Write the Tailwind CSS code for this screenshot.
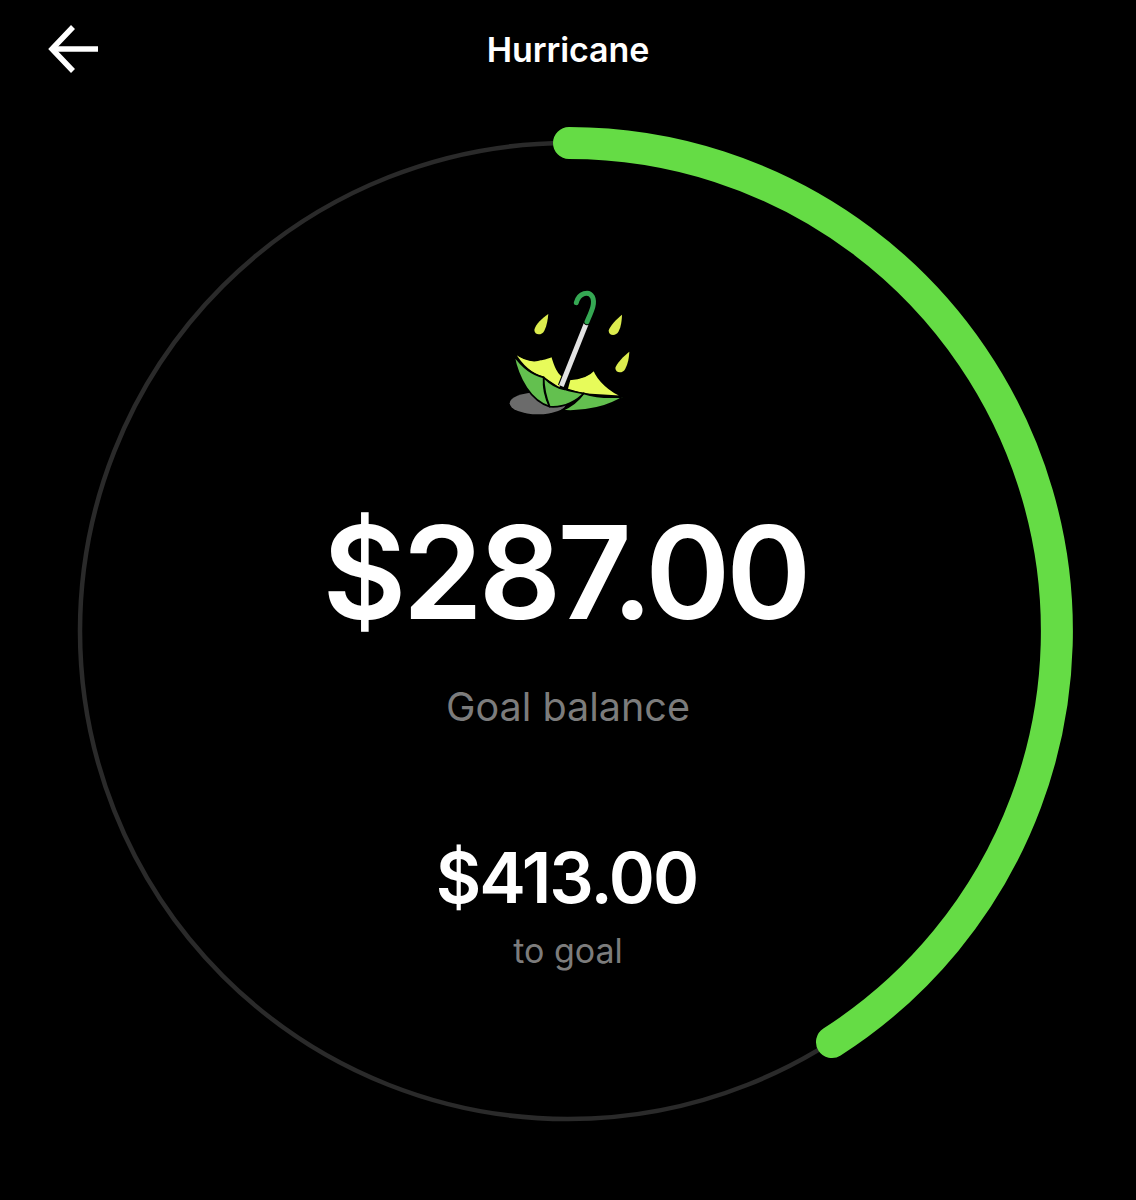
<!DOCTYPE html>
<html lang="en">
<head>
    <meta charset="UTF-8">
    <title>Hurricane</title>
    <script src="https://cdn.jsdelivr.net/npm/@tailwindcss/browser@4"></script>
</head>
<body class="bg-black">
    <div class="relative w-[1136px] h-[1200px] overflow-hidden bg-black text-white font-['Inter',sans-serif]">
        <!-- Progress ring -->
        <svg class="absolute left-0 top-0" width="1136" height="1200" viewBox="0 0 1136 1200" fill="none">
            <circle cx="568" cy="631" r="488" stroke="#2a2a2a" stroke-width="4.5"/>
            <path d="M569 143 A488 488 0 0 1 832 1042" stroke="#65dc45" stroke-width="32" stroke-linecap="round"/>
        </svg>

        <!-- Header -->
        <div class="relative flex items-center justify-center h-[100px]">
            <svg class="absolute left-[47px] top-[24px]" width="54" height="50" viewBox="0 0 54 50" fill="none" stroke="#fff" stroke-width="5.5">
                <path d="M51 25 H5"/>
                <path d="M26 3 L5 25 L26 47" stroke-linejoin="miter"/>
            </svg>
            <h1 class="text-[34px] leading-none font-semibold tracking-[-0.1px]">Hurricane</h1>
        </div>

        <!-- Goal details -->
        <div class="relative flex flex-col items-center">
            <svg class="mt-[180px]" width="150" height="140" viewBox="0 0 450 420" fill="none">
                <ellipse cx="135" cy="370" rx="85" ry="33" fill="#6b6b6b"/>
                <!-- rain drops -->
                <path d="M166 102 C150 112 126 135 124 150 C124 166 146 168 154 152 C162 136 164 120 166 102Z" fill="#dcec4e"/>
                <path d="M387 104 C371 116 349 140 347 152 C347 168 369 170 377 154 C385 138 386 122 387 104Z" fill="#dcec4e"/>
                <path d="M409 215 C393 227 369 252 367 264 C367 280 389 282 397 266 C405 250 408 234 409 215Z" fill="#dcec4e"/>
                <g stroke="#000" stroke-width="5" stroke-linejoin="round">
                    <!-- inside of the canopy -->
                    <path d="M64 218 C100 245 125 245 145 238 C160 235 170 232 177 228 C185 255 195 285 216 292 L200 325 L150 292 C110 280 85 255 64 218Z" fill="#e7fb5a"/>
                    <path d="M230 298 C260 297 285 290 303 270 C315 300 350 335 392 350 L270 342 L222 328Z" fill="#e7fb5a"/>
                    <!-- canopy panels -->
                    <path d="M62 225 C90 265 120 285 152 292 C150 320 155 350 170 380 C115 362 76 300 62 225Z" fill="#63c04f"/>
                    <path d="M272 340 C310 352 350 354 392 350 C350 378 280 398 205 392 C235 380 258 360 272 340Z" fill="#63c04f"/>
                    <path d="M152 292 C170 310 195 325 215 328 C235 335 255 338 272 340 C255 360 215 384 170 380 C158 350 152 320 152 292Z" fill="#63c04f"/>
                </g>
                <path d="M205 318 L280 130" stroke="#000" stroke-width="22"/>
                <path d="M205 318 L280 130" stroke="#e3e3e3" stroke-width="15"/>
                <path d="M282 125 C295 95 308 70 298 50 C288 32 258 38 250 68" stroke="#000" stroke-width="21" stroke-linecap="round"/>
                <path d="M282 125 C295 95 308 70 298 50 C288 32 258 38 250 68" stroke="#35a853" stroke-width="15" stroke-linecap="round"/>
            </svg>
            <div class="mt-[88px] mr-[6px] text-[129px] leading-none font-semibold tracking-[-4px]">$287.00</div>
            <div class="mt-[51px] text-[39.5px] leading-none text-[#7c7c7c]">Goal balance</div>
            <div class="mt-[115px] mr-[3px] text-[70px] leading-none font-semibold tracking-[-2px]">$413.00</div>
            <div class="mt-[21px] text-[34px] leading-none text-[#7c7c7c]">to goal</div>
        </div>
    </div>
</body>
</html>
